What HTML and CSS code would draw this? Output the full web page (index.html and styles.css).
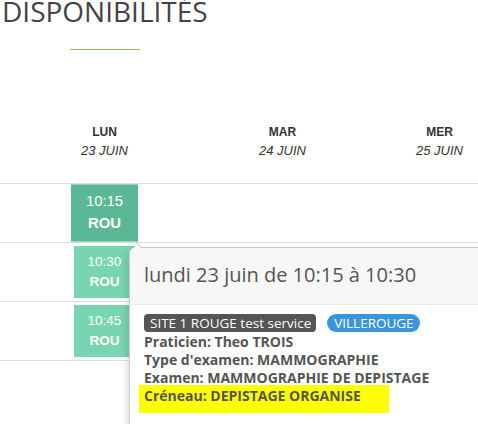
FILE: index.html
```html
<!DOCTYPE html>
<html lang="fr">
<head>
<meta charset="utf-8">
<title>Disponibilités</title>
<link rel="stylesheet" href="styles.css">
</head>
<body>
<div class="page">
  <h1 class="title">DISPONIBILITÉS</h1>
  <div class="divider"></div>

  <div class="grid head">
    <div class="day"><div class="dname">LUN</div><div class="ddate">23 JUIN</div></div>
    <div class="day"><div class="dname">MAR</div><div class="ddate">24 JUIN</div></div>
    <div class="day"><div class="dname">MER</div><div class="ddate">25 JUIN</div></div>
  </div>

  <div class="grid row">
    <div class="cell"><div class="slot active"><div>10:15</div><div class="code">ROU</div></div></div>
    <div class="cell"></div>
    <div class="cell"></div>
  </div>
  <div class="grid row">
    <div class="cell"><div class="slot"><div>10:30</div><div class="code">ROU</div></div></div>
    <div class="cell"></div>
    <div class="cell"></div>
  </div>
  <div class="grid row">
    <div class="cell"><div class="slot"><div>10:45</div><div class="code">ROU</div></div></div>
    <div class="cell"></div>
    <div class="cell"></div>
  </div>

  <div class="popover">
    <svg class="arrow" width="14" height="9" viewBox="0 0 14 9">
      <polygon points="5,1 12,8 5,8" fill="#f7f7f7"/>
      <line x1="5" y1="1" x2="12.5" y2="8.5" stroke="rgba(0,0,0,0.22)" stroke-width="1"/>
    </svg>
    <div class="pop-title">lundi 23 juin de 10:15 à 10:30</div>
    <div class="pop-body">
      <div class="badges">
        <span class="badge dark">SITE 1 ROUGE test service</span>
        <span class="badge blue">VILLEROUGE</span>
      </div>
      <div class="line">Praticien: Theo TROIS</div>
      <div class="line">Type d'examen: MAMMOGRAPHIE</div>
      <div class="line">Examen: MAMMOGRAPHIE DE DEPISTAGE</div>
      <div class="line hl">Créneau: DEPISTAGE ORGANISE</div>
    </div>
  </div>
</div>
</body>
</html>
```

FILE: styles.css
```css
html, body {
  margin: 0;
  padding: 0;
  background: #fff;
}
body {
  width: 478px;
  height: 424px;
  overflow: hidden;
}
.page {
  position: relative;
  width: 478px;
  height: 424px;
  overflow: hidden;
}
.title {
  margin: -4px 0 0 0;
  padding-left: 2px;
  font-family: "Open Sans", sans-serif;
  font-weight: 400;
  font-size: 28px;
  line-height: 30px;
  color: #444;
}
.divider {
  width: 70px;
  height: 1px;
  background: #8bc34a;
  margin: 23px 0 0 70px;
}
.grid {
  display: grid;
  grid-template-columns: 209px 147px 167px;
}
.head {
  padding: 75px 0 24px;
  border-bottom: 1px solid #ddd;
  font-family: "Liberation Sans", Arial, sans-serif;
  color: #333;
  text-align: center;
}
.dname {
  font-weight: 700;
  font-size: 12px;
  line-height: 15px;
}
.ddate {
  margin-top: 3px;
  font-style: italic;
  font-size: 13px;
  line-height: 16px;
}
.row {
  height: 58px;
  border-bottom: 1px solid #ddd;
}
.cell {
  display: flex;
  justify-content: center;
  align-items: center;
}
.slot {
  width: 61px;
  height: 52px;
  box-sizing: border-box;
  padding-top: 6px;
  background: #79d5b1;
  color: #fff;
  text-align: center;
  font-family: "Liberation Sans", Arial, sans-serif;
  font-size: 13.5px;
  line-height: 20px;
}
.slot .code {
  font-weight: 700;
}
.slot.active {
  background: #5bb896;
  transform: scale(1.1);
}
.popover {
  position: absolute;
  left: 129px;
  top: 247px;
  width: 400px;
  height: 220px;
  background: #fff;
  border: 1px solid rgba(0, 0, 0, 0.2);
  border-radius: 6px;
  box-shadow: 0 5px 10px rgba(0, 0, 0, 0.2);
  font-family: "Open Sans", sans-serif;
  color: #555;
}
.arrow {
  position: absolute;
  left: 0;
  top: -8px;
}
.pop-title {
  padding: 16px 14px 18px;
  font-size: 20px;
  line-height: 22px;
  background: #f7f7f7;
  border-bottom: 1px solid #ebebeb;
  border-radius: 5px 5px 0 0;
}
.pop-body {
  padding: 9px 14px;
}
.badges {
  display: flex;
  gap: 11px;
  height: 18px;
}
.badge {
  display: inline-flex;
  align-items: center;
  height: 18px;
  font-size: 13.5px;
  color: #fff;
  white-space: nowrap;
}
.badge.dark {
  background: #555;
  border-radius: 4px;
  padding: 0 5px 0 6px;
}
.badge.blue {
  background: #3a96dc;
  border-radius: 9px;
  padding: 0 6px 0 7px;
}
.line {
  font-weight: 700;
  font-size: 14px;
  line-height: 18px;
}
.line:nth-child(2) {
  margin-top: 1px;
}
.hl {
  width: 250px;
  box-sizing: border-box;
  margin: -2px 0 0 -5px;
  padding: 2px 5px 8px;
  background: #ffff00;
}
```
